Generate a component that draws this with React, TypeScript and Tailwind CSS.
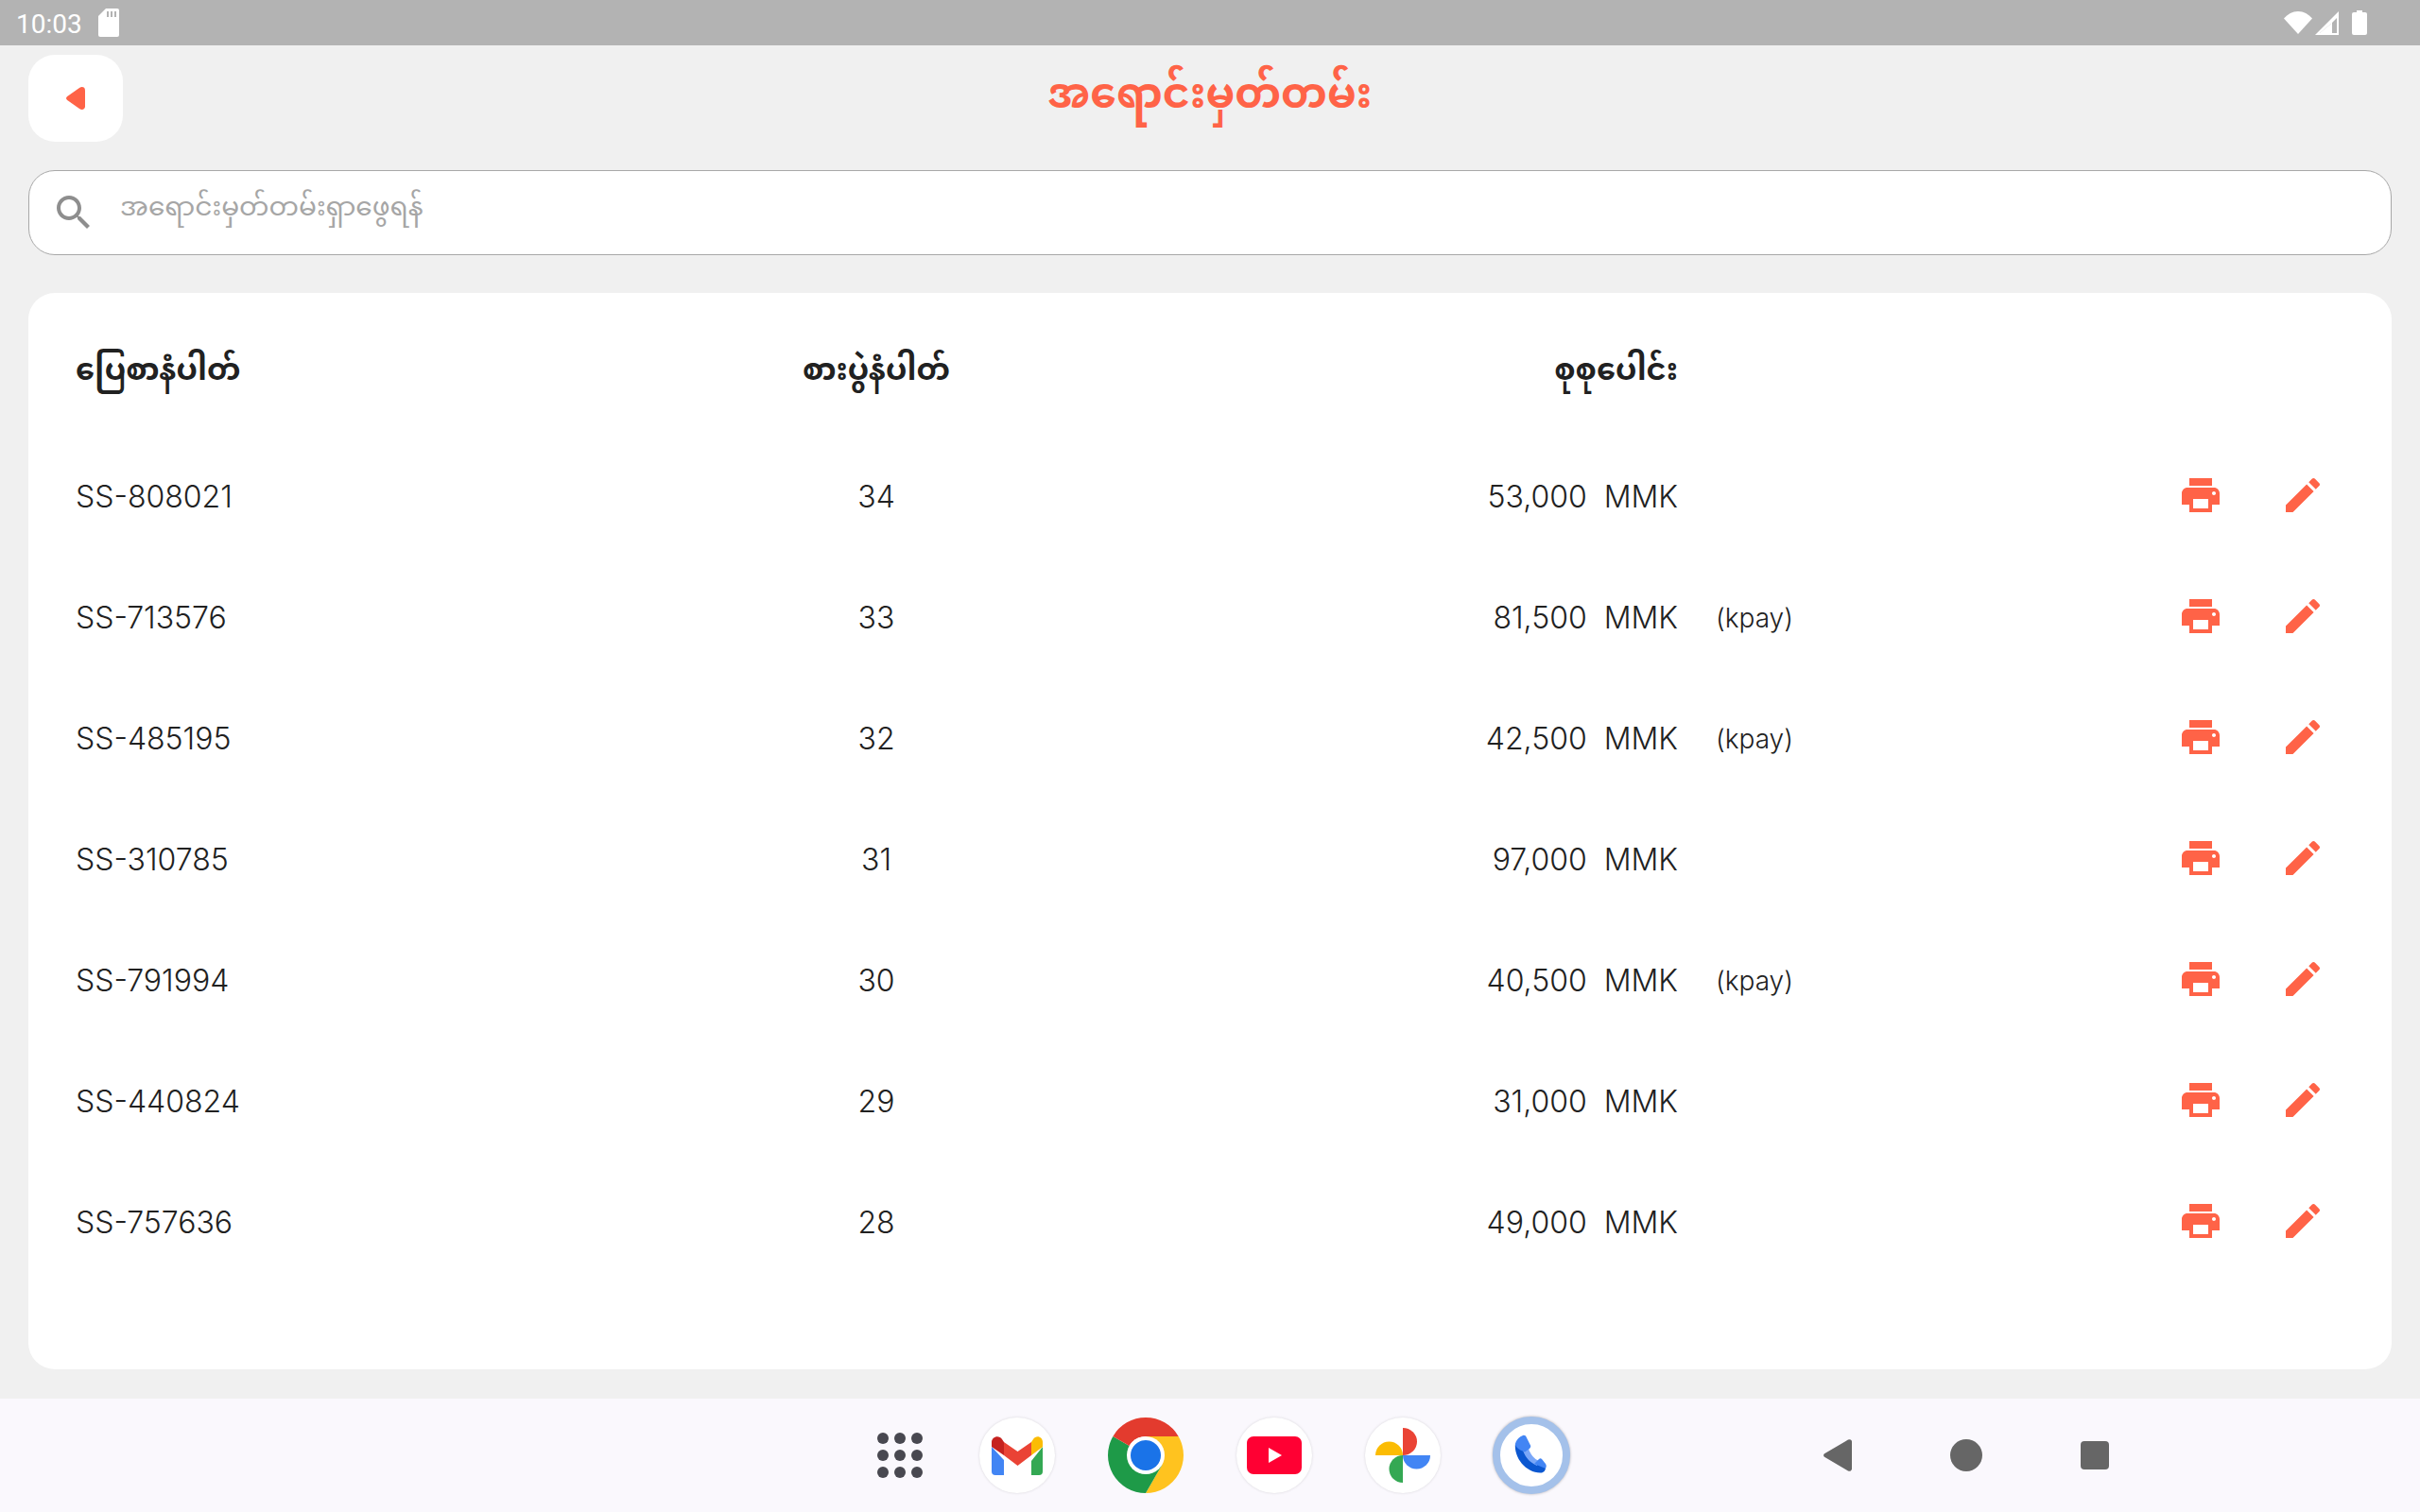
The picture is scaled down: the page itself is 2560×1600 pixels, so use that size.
const font = "font-['Inter','Noto_Sans_Myanmar','Padauk','Noto_Sans',sans-serif]";

const rows = [
  { slip: 'SS-808021', table: 34, total: '53,000', kpay: false },
  { slip: 'SS-713576', table: 33, total: '81,500', kpay: true },
  { slip: 'SS-485195', table: 32, total: '42,500', kpay: true },
  { slip: 'SS-310785', table: 31, total: '97,000', kpay: false },
  { slip: 'SS-791994', table: 30, total: '40,500', kpay: true },
  { slip: 'SS-440824', table: 29, total: '31,000', kpay: false },
  { slip: 'SS-757636', table: 28, total: '49,000', kpay: false },
];

function PrintIcon() {
  return (
    <svg viewBox="0 0 24 24" className="h-12 w-12 fill-[#ff6347]">
      <path d="M19 8H5c-1.66 0-3 1.34-3 3v6h4v4h12v-4h4v-6c0-1.66-1.34-3-3-3zm-3 11H8v-5h8v5zm3-7c-.55 0-1-.45-1-1s.45-1 1-1 1 .45 1 1-.45 1-1 1zm-1-9H6v4h12V3z" />
    </svg>
  );
}

function EditIcon() {
  return (
    <svg viewBox="0 0 24 24" className="h-12 w-12 fill-[#ff6347]">
      <path d="M3 17.25V21h3.75L17.81 9.94l-3.75-3.75L3 17.25zM20.71 7.04c.39-.39.39-1.02 0-1.41l-2.34-2.34c-.39-.39-1.02-.39-1.41 0l-1.83 1.83 3.75 3.75 1.83-1.83z" />
    </svg>
  );
}

function StatusBar() {
  return (
    <div className="flex h-12 shrink-0 items-center justify-between bg-[#b3b3b3] pl-[17px] pr-[56px] text-white">
      <div className="flex items-center gap-[17px]">
        <span className="mt-[3px] font-['Roboto',sans-serif] text-[28px] leading-none">10:03</span>
        <svg viewBox="0 0 22 30" className="h-[30px] w-[22px] fill-white">
          <path d="M8 0h12a2 2 0 0 1 2 2v26a2 2 0 0 1-2 2H2a2 2 0 0 1-2-2V8z" />
          <path d="M9 3h2v6H9zM13 3h2v6h-2zM17 3h2v6h-2z" className="fill-[#b3b3b3]" />
        </svg>
      </div>
      <div className="flex items-center">
        <svg viewBox="0 0 30 26" className="h-[26px] w-[30px] fill-white">
          <path d="M15 25 0 8.500C4 4 9 1 15 1s11 3 15 7.500z" />
        </svg>
        <svg viewBox="0 0 25 26" className="ml-[3px] h-[26px] w-[25px] fill-white">
          <path fillRule="evenodd" d="M25 1v25H0zM23 8l-5 5v11h5zM17 14 5 24h12z" />
          <path d="M17 14v10H5z" />
        </svg>
        <svg viewBox="0 0 16 26" className="ml-[14px] h-[26px] w-4 fill-white">
          <path d="M5 0h6v2h3a2 2 0 0 1 2 2v20a2 2 0 0 1-2 2H2a2 2 0 0 1-2-2V4a2 2 0 0 1 2-2h3z" />
        </svg>
      </div>
    </div>
  );
}

function AppCircle({ children }: { children: React.ReactNode }) {
  return (
    <div className="h-20 w-20 rounded-full bg-white shadow-[0_0_3px_rgba(0,0,0,0.14)]">
      <svg viewBox="0 0 80 80" className="h-20 w-20">
        {children}
      </svg>
    </div>
  );
}

function Dock() {
  return (
    <div className="flex h-[120px] shrink-0 items-center bg-[#faf8fd] pl-[928px]">
      <div className="grid w-12 grid-cols-3 gap-[6px]">
        {Array.from({ length: 9 }).map((_, i) => (
          <div key={i} className="h-3 w-3 rounded-full bg-[#484850]" />
        ))}
      </div>
      <div className="ml-[60px] flex items-center gap-14">
        <AppCircle>
          <path fill="#4285f4" d="M13 31 26 45v16h-9a4 4 0 0 1-4-4z" />
          <path fill="#34a853" d="M67 31 55 46v15h8a4 4 0 0 0 4-4z" />
          <path fill="#ea4335" d="M26 26 40.500 36 55 26v14L40.500 51 26 40z" />
          <path fill="#c5221f" d="M13 31v-5c0-6 8-8 11-3l2 3v14z" />
          <path fill="#fbbc04" d="M55 26l2-3c3-5 10-3 10 3v5L55 40z" />
        </AppCircle>
        <svg viewBox="0 0 80 80" className="h-20 w-20">
          <path fill="#ffc31f" d="M74.640 20A40 40 0 0 1 40 80L57.320 50 40 20z" />
          <path fill="#1e9a48" d="M5.360 20A40 40 0 0 0 40 80L57.320 50 22.680 30z" />
          <path fill="#e33b2e" d="M40 0a40 40 0 0 1 34.640 20H40a20 20 0 0 0-17.320 10L5.360 20A40 40 0 0 1 40 0z" />
          <circle cx="40" cy="40" r="20" fill="#fff" />
          <circle cx="40" cy="40" r="16" fill="#1a73e8" />
        </svg>
        <AppCircle>
          <rect x="11" y="20" width="58" height="40" rx="7" fill="#ff0033" />
          <path fill="#fff" d="M34 32v16l14-8z" />
        </AppCircle>
        <AppCircle>
          <path fill="#ea4335" d="M40 11a15 14.500 0 0 1 0 29z" />
          <path fill="#fbbc04" d="M11 40a14.500 14.500 0 0 1 29 0z" />
          <path fill="#4285f4" d="M40 40h29a14.500 14.500 0 0 1-29 0z" />
          <path fill="#34a853" d="M40 40v29a14.500 14.500 0 0 1 0-29z" />
        </AppCircle>
        {/* phone sits a touch wider than the others, its ring overhangs */}
        <div className="-ml-[1px] flex h-[82px] w-[82px] items-center justify-center rounded-full border-[8px] border-[#a4c1ea] bg-white shadow-[0_0_3px_rgba(0,0,0,0.3)]">
          <svg viewBox="0 0 66 66" className="h-[66px] w-[66px]">
            <path fill="#0b57d0" d="M16 20C14 36 28 52 43 51.500c3 0 5-2.500 5-5.500L38 42C33 40 28 36 25 29z" />
            <path fill="#7aa7f8" d="M24 28l6-2c2 6 6 11 11 13l-2 5C32 41 27 36 24 28z" />
            <path fill="#4285f4" d="M16 22c0-4 3-8 8-10 2-.500 3 .500 3.500 1.500l4.500 9c.500 1.500 0 2.500-1 3.500l-5 3.500C21 28 17 25 16 22z" />
            <path fill="#4285f4" d="M36 42l5-5c1-1 2-1 3 0l4 5c1 1.500 1 3 0 5z" />
          </svg>
        </div>
      </div>
      <div className="ml-[268px] flex items-center gap-[104px]">
        <svg viewBox="0 0 30 34" className="h-[34px] w-[30px] fill-[#666]">
          <path d="M1 15.300 26 .6A2.600 2.600 0 0 1 30 3v28a2.600 2.600 0 0 1-4 2.400L1 18.700a2 2 0 0 1 0-3.400z" />
        </svg>
        <div className="h-[34px] w-[34px] rounded-full bg-[#666]" />
        <div className="h-[30px] w-[30px] rounded-[4px] bg-[#666]" />
      </div>
    </div>
  );
}

export default function App() {
  return (
    <div className={`flex h-screen w-full flex-col overflow-hidden bg-[#f0f0f0] text-[#212121] ${font}`}>
      <StatusBar />

      <div className="flex min-h-0 flex-1 flex-col px-[30px] pb-[31px] pt-[10px]">
        {/* Header */}
        <div className="relative flex h-[92px] shrink-0 items-center justify-center">
          <button className="absolute left-0 top-0 flex h-[92px] w-[100px] items-center justify-center rounded-[28px] bg-white">
            <svg viewBox="0 0 20 24" className="h-6 w-5 fill-[#ff6347]">
              <path d="M1.200 10 14 1c2.500-1.700 6-1 6 2.500v17c0 3.500-3.500 4.200-6 2.500L1.200 14c-1.600-1.200-1.600-2.800 0-4z" />
            </svg>
          </button>
          <h1 className="-mt-[12px] text-[44px] font-bold leading-none text-[#ff6347]">အရောင်းမှတ်တမ်း</h1>
        </div>

        {/* Search */}
        <div className="mt-[30px] flex h-[90px] shrink-0 items-center rounded-[28px] border border-[#a8a8a8] bg-white pl-[23px]">
          <svg viewBox="0 0 24 24" className="h-12 w-12 fill-[#8e8e8e]">
            <path d="M15.500 14h-.79l-.28-.27C15.410 12.590 16 11.110 16 9.500 16 5.910 13.090 3 9.500 3S3 5.910 3 9.500 5.910 16 9.500 16c1.610 0 3.090-.59 4.230-1.570l.27.28v.79l5 4.990L20.490 19l-4.990-5zm-6 0C7.010 14 5 11.990 5 9.500S7.010 5 9.500 5 14 7.010 14 9.500 11.990 14 9.500 14z" />
          </svg>
          <span className="-mt-[14px] ml-[25px] text-[28px] text-[#a6a6a6]">အရောင်းမှတ်တမ်းရှာဖွေရန်</span>
        </div>

        {/* Table */}
        <div className="mt-10 min-h-0 flex-1 rounded-[28px] bg-white pl-[50px] pr-[70px] pt-[37px]">
          <div className="grid h-[88px] grid-cols-[540px_614px_541px_1fr] items-center text-[32px] font-bold">
            <div>ပြေစာနံပါတ်</div>
            <div className="text-center">စားပွဲနံပါတ်</div>
            <div className="text-right">စုစုပေါင်း</div>
          </div>
          <div className="mt-[25px]">
            {rows.map((row) => (
              <div key={row.slip} className="grid h-32 grid-cols-[540px_614px_541px_1fr] items-center text-[32px] font-light">
                <div className="mt-[3px]">{row.slip}</div>
                <div className="mt-[3px] text-center">{row.table}</div>
                <div className="mt-[3px] text-right">
                  {row.total}
                  <span className="ml-[18px]">MMK</span>
                </div>
                <div className="flex items-center justify-between pl-[40px]">
                  <span className="mt-[3px] text-[28px]">{row.kpay ? '(kpay)' : ''}</span>
                  <div className="flex items-center gap-[60px]">
                    <PrintIcon />
                    <EditIcon />
                  </div>
                </div>
              </div>
            ))}
          </div>
        </div>
      </div>

      <Dock />
    </div>
  );
}
